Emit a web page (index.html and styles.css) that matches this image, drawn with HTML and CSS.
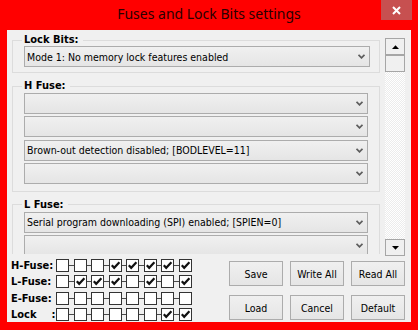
FILE: index.html
```html
<!DOCTYPE html>
<html>
<head>
<meta charset="utf-8">
<link rel="stylesheet" href="styles.css">
</head>
<body>
<div class="window">
  <div class="titlebar">
    <span class="spacer"></span>
    <span class="title">Fuses and Lock Bits settings</span>
    <span class="close"><svg width="9" height="9" viewBox="0 0 9 9"><path d="M1 1 L8 8 M8 1 L1 8" stroke="#fff" stroke-width="2" fill="none"/></svg></span>
  </div>
  <div class="client">
    <div class="pane-row">
      <div class="pane">
        <fieldset class="group group-lock">
          <legend>Lock Bits:</legend>
          <div class="combo combo-wide"><span>Mode 1: No memory lock features enabled</span><svg class="arrow" width="7" height="5" viewBox="0 0 7 5"><path d="M0.5 0.8 L3.5 3.8 L6.5 0.8" stroke="#5e5e5e" stroke-width="1.8" fill="none"/></svg></div>
        </fieldset>
        <fieldset class="group">
          <legend>H Fuse:</legend>
          <div class="combo"><span></span><svg class="arrow" width="7" height="5" viewBox="0 0 7 5"><path d="M0.5 0.8 L3.5 3.8 L6.5 0.8" stroke="#5e5e5e" stroke-width="1.8" fill="none"/></svg></div>
          <div class="combo"><span></span><svg class="arrow" width="7" height="5" viewBox="0 0 7 5"><path d="M0.5 0.8 L3.5 3.8 L6.5 0.8" stroke="#5e5e5e" stroke-width="1.8" fill="none"/></svg></div>
          <div class="combo"><span>Brown-out detection disabled; [BODLEVEL=11]</span><svg class="arrow" width="7" height="5" viewBox="0 0 7 5"><path d="M0.5 0.8 L3.5 3.8 L6.5 0.8" stroke="#5e5e5e" stroke-width="1.8" fill="none"/></svg></div>
          <div class="combo"><span></span><svg class="arrow" width="7" height="5" viewBox="0 0 7 5"><path d="M0.5 0.8 L3.5 3.8 L6.5 0.8" stroke="#5e5e5e" stroke-width="1.8" fill="none"/></svg></div>
        </fieldset>
        <fieldset class="group">
          <legend>L Fuse:</legend>
          <div class="combo"><span>Serial program downloading (SPI) enabled; [SPIEN=0]</span><svg class="arrow" width="7" height="5" viewBox="0 0 7 5"><path d="M0.5 0.8 L3.5 3.8 L6.5 0.8" stroke="#5e5e5e" stroke-width="1.8" fill="none"/></svg></div>
          <div class="combo"><span></span><svg class="arrow" width="7" height="5" viewBox="0 0 7 5"><path d="M0.5 0.8 L3.5 3.8 L6.5 0.8" stroke="#5e5e5e" stroke-width="1.8" fill="none"/></svg></div>
          <div class="combo"><span></span><svg class="arrow" width="7" height="5" viewBox="0 0 7 5"><path d="M0.5 0.8 L3.5 3.8 L6.5 0.8" stroke="#5e5e5e" stroke-width="1.8" fill="none"/></svg></div>
        </fieldset>
      </div>
      <div class="scrollbar">
        <div class="sb-btn"><svg width="7" height="4" viewBox="0 0 7 4"><polygon points="0,4 7,4 3.5,0.3" fill="#000"/></svg></div>
        <div class="sb-thumb"></div>
        <div class="sb-track"></div>
        <div class="sb-btn"><svg width="7" height="4" viewBox="0 0 7 4"><polygon points="0,0 7,0 3.5,3.7" fill="#000"/></svg></div>
      </div>
    </div>
    <div class="bottom">
      <div class="bits">
        <div class="bit-row">
          <span class="bit-label">H-Fuse:</span>
          <span class="cb"></span><span class="sep"></span>
          <span class="cb"></span><span class="sep"></span>
          <span class="cb"></span><span class="sep"></span>
          <span class="cb on"><svg viewBox="0 0 11 11"><polyline points="1.8,5.2 4.2,7.8 9.4,2.2" stroke="#111" stroke-width="2.2" fill="none"/></svg></span><span class="sep"></span>
          <span class="cb on"><svg viewBox="0 0 11 11"><polyline points="1.8,5.2 4.2,7.8 9.4,2.2" stroke="#111" stroke-width="2.2" fill="none"/></svg></span><span class="sep"></span>
          <span class="cb on"><svg viewBox="0 0 11 11"><polyline points="1.8,5.2 4.2,7.8 9.4,2.2" stroke="#111" stroke-width="2.2" fill="none"/></svg></span><span class="sep"></span>
          <span class="cb on"><svg viewBox="0 0 11 11"><polyline points="1.8,5.2 4.2,7.8 9.4,2.2" stroke="#111" stroke-width="2.2" fill="none"/></svg></span><span class="sep"></span>
          <span class="cb on"><svg viewBox="0 0 11 11"><polyline points="1.8,5.2 4.2,7.8 9.4,2.2" stroke="#111" stroke-width="2.2" fill="none"/></svg></span>
        </div>
        <div class="bit-row">
          <span class="bit-label">L-Fuse:</span>
          <span class="cb"></span><span class="sep"></span>
          <span class="cb on"><svg viewBox="0 0 11 11"><polyline points="1.8,5.2 4.2,7.8 9.4,2.2" stroke="#111" stroke-width="2.2" fill="none"/></svg></span><span class="sep"></span>
          <span class="cb on"><svg viewBox="0 0 11 11"><polyline points="1.8,5.2 4.2,7.8 9.4,2.2" stroke="#111" stroke-width="2.2" fill="none"/></svg></span><span class="sep"></span>
          <span class="cb on"><svg viewBox="0 0 11 11"><polyline points="1.8,5.2 4.2,7.8 9.4,2.2" stroke="#111" stroke-width="2.2" fill="none"/></svg></span><span class="sep"></span>
          <span class="cb"></span><span class="sep"></span>
          <span class="cb on"><svg viewBox="0 0 11 11"><polyline points="1.8,5.2 4.2,7.8 9.4,2.2" stroke="#111" stroke-width="2.2" fill="none"/></svg></span><span class="sep"></span>
          <span class="cb"></span><span class="sep"></span>
          <span class="cb on"><svg viewBox="0 0 11 11"><polyline points="1.8,5.2 4.2,7.8 9.4,2.2" stroke="#111" stroke-width="2.2" fill="none"/></svg></span>
        </div>
        <div class="bit-row">
          <span class="bit-label">E-Fuse:</span>
          <span class="cb"></span><span class="sep"></span>
          <span class="cb"></span><span class="sep"></span>
          <span class="cb"></span><span class="sep"></span>
          <span class="cb"></span><span class="sep"></span>
          <span class="cb"></span><span class="sep"></span>
          <span class="cb"></span><span class="sep"></span>
          <span class="cb"></span><span class="sep"></span>
          <span class="cb"></span>
        </div>
        <div class="bit-row">
          <span class="bit-label"><span>Lock</span><span>:</span></span>
          <span class="cb"></span><span class="sep"></span>
          <span class="cb"></span><span class="sep"></span>
          <span class="cb"></span><span class="sep"></span>
          <span class="cb"></span><span class="sep"></span>
          <span class="cb"></span><span class="sep"></span>
          <span class="cb"></span><span class="sep"></span>
          <span class="cb on"><svg viewBox="0 0 11 11"><polyline points="1.8,5.2 4.2,7.8 9.4,2.2" stroke="#111" stroke-width="2.2" fill="none"/></svg></span><span class="sep"></span>
          <span class="cb on"><svg viewBox="0 0 11 11"><polyline points="1.8,5.2 4.2,7.8 9.4,2.2" stroke="#111" stroke-width="2.2" fill="none"/></svg></span>
        </div>
      </div>
      <div class="buttons">
        <button class="btn">Save</button>
        <button class="btn">Write All</button>
        <button class="btn">Read All</button>
        <button class="btn">Load</button>
        <button class="btn">Cancel</button>
        <button class="btn">Default</button>
      </div>
    </div>
  </div>
</div>
</body>
</html>
```
FILE: styles.css
```css
html, body {
  margin: 0;
  padding: 0;
}
body {
  width: 418px;
  height: 330px;
  overflow: hidden;
  background: #ff0000;
  font-family: "DejaVu Sans Condensed", "DejaVu Sans", sans-serif;
  font-size: 11px;
  color: #000;
}
.window {
  width: 418px;
  height: 330px;
  display: flex;
  flex-direction: column;
  background: #ff0000;
}
.titlebar {
  height: 30px;
  flex: none;
  display: grid;
  grid-template-columns: 1fr auto 1fr;
  align-items: start;
}
.title {
  font-family: "Noto Sans", sans-serif;
  font-size: 14px;
  line-height: 28px;
  color: #2a0000;
  white-space: nowrap;
}
.close {
  justify-self: end;
  width: 31px;
  height: 20px;
  margin-right: 6px;
  background: #c75050;
  display: flex;
  align-items: center;
  justify-content: center;
}
.client {
  margin: 0 7px;
  height: 292px;
  flex: none;
  background: #f0f0f0;
  display: flex;
  flex-direction: column;
}
.pane-row {
  height: 226px;
  flex: none;
  display: flex;
}
.pane {
  width: 373px;
  margin-left: 5px;
  height: 224px;
  overflow: hidden;
  padding-top: 4px;
  box-sizing: border-box;
  flex: none;
}
.group {
  margin: 0 0 7px 0;
  width: 368px;
  box-sizing: border-box;
  border: 1px solid #dcdcdc;
  padding: 1px 0 7px 11px;
}
.group-lock {
  padding-top: 0;
  padding-bottom: 5px;
}
.group legend {
  margin-left: -2px;
  padding: 0 4px 0 2px;
  font-weight: bold;
  line-height: 12px;
  color: #000;
}
.combo {
  width: 344px;
  height: 21px;
  box-sizing: border-box;
  border: 1px solid #acacac;
  background: linear-gradient(#f0f0f0, #e5e5e5);
  display: flex;
  align-items: center;
  justify-content: space-between;
  padding: 0 4px 0 2px;
  white-space: nowrap;
  font-size: 10.5px;
}
.combo + .combo {
  margin-top: 2.33px;
}
.combo-wide {
  width: 346px;
}
.arrow {
  flex: none;
}
.scrollbar {
  width: 20px;
  height: 218px;
  margin-top: 8px;
  display: flex;
  flex-direction: column;
  flex: none;
}
.sb-btn, .sb-thumb {
  height: 17px;
  box-sizing: border-box;
  border: 1px solid #a6a6a6;
  background: #f0f0f0;
  display: flex;
  align-items: center;
  justify-content: center;
  flex: none;
}
.sb-track {
  flex: 1;
  background: repeating-conic-gradient(#ffffff 0 25%, #ececec 0 50%) 0 0 / 2px 2px;
}
.bottom {
  flex: 1;
  display: flex;
  justify-content: space-between;
}
.bits {
  margin-left: 4px;
  margin-top: 3px;
  display: flex;
  flex-direction: column;
  gap: 3.33px;
}
.bit-row {
  display: flex;
  align-items: center;
  height: 13px;
}
.bit-label {
  width: 45px;
  flex: none;
  font-weight: bold;
  display: flex;
  gap: 15px;
}
.cb {
  width: 13px;
  height: 13px;
  box-sizing: border-box;
  border: 1px solid #333;
  background: #fff;
  flex: none;
  display: flex;
}
.cb svg {
  width: 11px;
  height: 11px;
}
.sep {
  width: 4.5px;
  height: 1px;
  background: #4a4a4a;
  flex: none;
}
.buttons {
  margin-top: 5px;
  margin-right: 6px;
  display: grid;
  grid-template-columns: repeat(3, 54px);
  grid-auto-rows: 25px;
  column-gap: 7px;
  row-gap: 9px;
  align-content: start;
}
.btn {
  font-family: inherit;
  font-size: 10.5px;
  color: #000;
  border: 1px solid #acacac;
  background: linear-gradient(#f0f0f0, #e5e5e5);
  padding: 0;
  margin: 0;
  border-radius: 0;
}
```
